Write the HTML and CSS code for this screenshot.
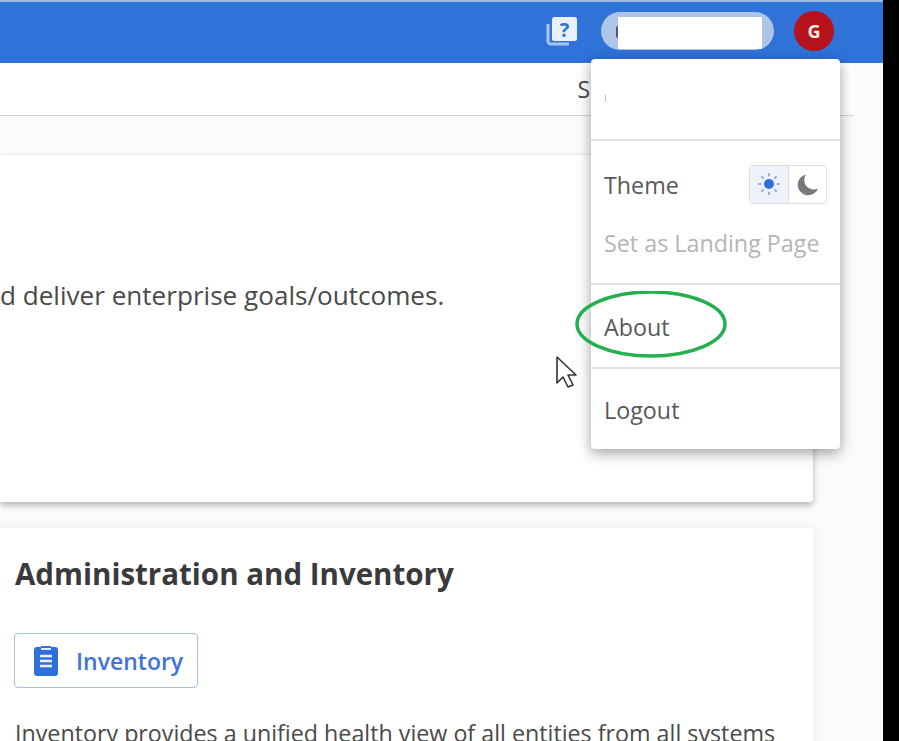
FILE: index.html
```html
<!DOCTYPE html>
<html lang="en">
  <head>
    <meta charset="UTF-8">
    <meta name="viewport" content="width=device-width, initial-scale=1.0">
    <title>Home</title>
    <link rel="stylesheet" href="styles.css">
  </head>
  <body>
    <div class="screen">
      <div class="app">
        <header class="topbar">
          <svg class="help-icon" width="32" height="32" viewBox="0 0 32 32">
            <path d="M2 9v17a3 3 0 0 0 3 3h18" fill="none" stroke="#a9c6f2" stroke-width="3"/>
            <rect x="6" y="2" width="25" height="24" rx="2.5" fill="#e8f0fc"/>
            <text x="18.5" y="22" class="help-mark">?</text>
          </svg>
          <div class="user-pill"><span class="user-initial"></span><span class="user-mask"></span></div>
          <div class="avatar">G</div>
        </header>

        <div class="subbar"><span class="subbar-label">S</span></div>

        <main class="content">
          <section class="card card-first">
            <p class="goals">d deliver enterprise goals/outcomes.</p>
          </section>
          <section class="card card-second">
            <h2>Administration and Inventory</h2>
            <button class="inventory-btn">
              <svg width="24" height="30" viewBox="0 0 24 30">
                <path d="M3 1h4V0h10v1h4a3 3 0 0 1 3 3v23a3 3 0 0 1-3 3H3a3 3 0 0 1-3-3V4a3 3 0 0 1 3-3z" fill="#2f6fdb"/>
                <path d="M7 3h10" stroke="#dfe9fa" stroke-width="2"/>
                <path d="M6 10h12M6 15h12M6 20h12" stroke="#e8f0fc" stroke-width="2.4"/>
              </svg>
              Inventory
            </button>
            <p class="desc">Inventory provides a unified health view of all entities from all systems</p>
          </section>
        </main>
      </div>
      <div class="strip"></div>

      <!-- user dropdown, sits over the page -->
      <div class="menu">
        <div class="menu-section menu-user"><span class="user-tick"></span></div>
        <div class="menu-section menu-prefs">
          <div class="theme-row">
            <span>Theme</span>
            <div class="theme-toggle">
              <span class="theme-opt theme-on">
                <svg width="26" height="26" viewBox="0 0 26 26">
                  <circle cx="13" cy="12" r="5" fill="#2f6fdb"/>
                  <path d="M13 2v1.5M13 20.5V22M3 12h1.5M21.5 12H23M6 5l1 1M19 18l1 1M6 19l1-1M19 6l1-1" stroke="#8db0ea" stroke-width="2" stroke-linecap="round"/>
                </svg>
              </span>
              <span class="theme-opt">
                <svg width="26" height="26" viewBox="0 0 26 26">
                  <path d="M12 2.500a10.500 10.500 0 1 0 12 14 9.500 9.500 0 0 1-12-14z" fill="#77797d"/>
                </svg>
              </span>
            </div>
          </div>
          <div class="landing">Set as Landing Page</div>
        </div>
        <div class="menu-section menu-item">About</div>
        <div class="menu-section menu-item menu-last">Logout</div>
      </div>

      <svg class="about-ring" width="154" height="70" viewBox="0 0 154 70">
        <ellipse cx="77" cy="33" rx="74" ry="32" fill="none" stroke="#22b14c" stroke-width="3.500"/>
      </svg>

      <svg class="cursor" width="24" height="34" viewBox="0 0 24 34">
        <path d="M2 2v26l6-6 5 10 5-2-5-10h8z" fill="#fff" stroke="#333" stroke-width="1.600" stroke-linejoin="round"/>
      </svg>
    </div>
  </body>
</html>
```

FILE: styles.css
```css
body {
	margin: 0;
	padding: 0;
	font-family: "Open Sans", "Noto Sans", sans-serif;
	color: #4a4a4a;
	background: #000;
}
.screen {
	position: relative;
	display: flex;
	width: 899px;
	height: 741px;
	overflow: hidden;
}
.app {
	width: 883px;
	height: 741px;
	display: flex;
	flex-direction: column;
	background: #fbfbfb;
}
.strip {
	width: 16px;
	background: #000;
}

/* top bar */
.topbar {
	height: 61px;
	flex: none;
	box-sizing: content-box;
	border-top: 2px solid #9db9e2;
	background: #2f72d8;
	display: flex;
	align-items: flex-start;
	justify-content: flex-end;
	padding-right: 49px;
}
.help-icon {
	margin: 13px 23px 0 0;
}
.help-mark {
	font-size: 20px;
	font-weight: 700;
	fill: #2f72d8;
	text-anchor: middle;
}
.user-pill {
	width: 173px;
	height: 38px;
	margin-top: 10px;
	border-radius: 19px;
	background: #adc5e8;
	box-sizing: border-box;
	padding: 5px 0 0 15px;
	display: flex;
	align-items: flex-start;
}
.user-initial {
	width: 2px;
	height: 12px;
	margin-top: 9px;
	background: #4a5a70;
	border-radius: 2px 0 0 2px;
}
.user-mask {
	display: block;
	width: 144px;
	height: 32px;
	background: #fff;
}
.avatar {
	width: 40px;
	height: 40px;
	margin: 9px 0 0 20px;
	border-radius: 50%;
	background: #b5121b;
	color: #fdeee0;
	font-size: 18px;
	font-weight: 700;
	display: flex;
	align-items: center;
	justify-content: center;
}

.subbar {
	height: 52px;
	flex: none;
	margin-right: 29px;
	background: #fff;
	border-bottom: 1px solid #d4d4d4;
	display: flex;
	align-items: center;
	justify-content: flex-end;
	padding-right: 264px;
}
.subbar-label {
	font-size: 23px;
}

/* cards */
.content {
	padding-top: 39px;
	padding-right: 70px;
}
.card {
	background: #fff;
	box-sizing: border-box;
}
.card-first {
	height: 347px;
	padding-top: 124px;
	border-radius: 0 4px 4px 0;
	box-shadow: 0 3px 7px rgba(0, 0, 0, 0.3);
}
.goals {
	margin: 0;
	font-size: 26.100px;
	line-height: 33px;
	white-space: nowrap;
}
.card-second {
	margin-top: 26px;
	height: 240px;
	padding: 26px 0 0 15px;
	box-shadow: 0 0 12px rgba(0, 0, 0, 0.08);
	overflow: hidden;
}
.card-second h2 {
	margin: 0 0 39px;
	font-size: 29.500px;
	line-height: 40px;
	font-weight: 700;
	color: #3a3a3c;
}
.inventory-btn {
	display: flex;
	align-items: center;
	gap: 18px;
	width: 184px;
	height: 55px;
	margin-left: -1px;
	box-sizing: border-box;
	padding: 0 0 0 19px;
	background: #fff;
	border: 1px solid #a9bde6;
	border-radius: 4px;
	font-family: inherit;
	font-size: 23px;
	font-weight: 600;
	color: #3f74d6;
}
.desc {
	margin: 29px 0 0;
	font-size: 23.250px;
	line-height: 32px;
	white-space: nowrap;
}

/* dropdown */
.menu {
	position: absolute;
	left: 591px;
	top: 59px;
	width: 249px;
	height: 390px;
	background: #fff;
	border-radius: 4px;
	box-shadow: 0 4px 14px rgba(0, 0, 0, 0.38);
	font-size: 23.300px;
	color: #58585a;
	display: flex;
	flex-direction: column;
}
.menu-section {
	box-sizing: border-box;
	padding: 0 13px;
	border-bottom: 2px solid #e2e2e2;
}
.menu-user {
	height: 82px;
}
.user-tick {
	display: block;
	width: 1px;
	height: 6px;
	margin: 36px 0 0 1px;
	background: #b8b8b8;
}
.menu-prefs {
	height: 144px;
	padding-top: 24px;
}
.theme-row {
	display: flex;
	align-items: center;
	justify-content: space-between;
	height: 39px;
}
.theme-toggle {
	display: flex;
	width: 78px;
	height: 39px;
	box-sizing: border-box;
	border: 1px solid #dcdcdc;
	border-radius: 4px;
	overflow: hidden;
}
.theme-opt {
	flex: 1;
	display: flex;
	align-items: center;
	justify-content: center;
}
.theme-on {
	background: #edf2fb;
	border-right: 1px solid #dcdcdc;
}
.landing {
	margin-top: 24px;
	color: #b5b5b5;
	line-height: 30px;
}
.menu-item {
	height: 84px;
	line-height: 84px;
}
.menu-last {
	height: 80px;
	line-height: 82px;
	border-bottom: 0;
}

.about-ring {
	position: absolute;
	left: 574px;
	top: 291px;
}
.cursor {
	position: absolute;
	left: 555px;
	top: 355px;
}
```
